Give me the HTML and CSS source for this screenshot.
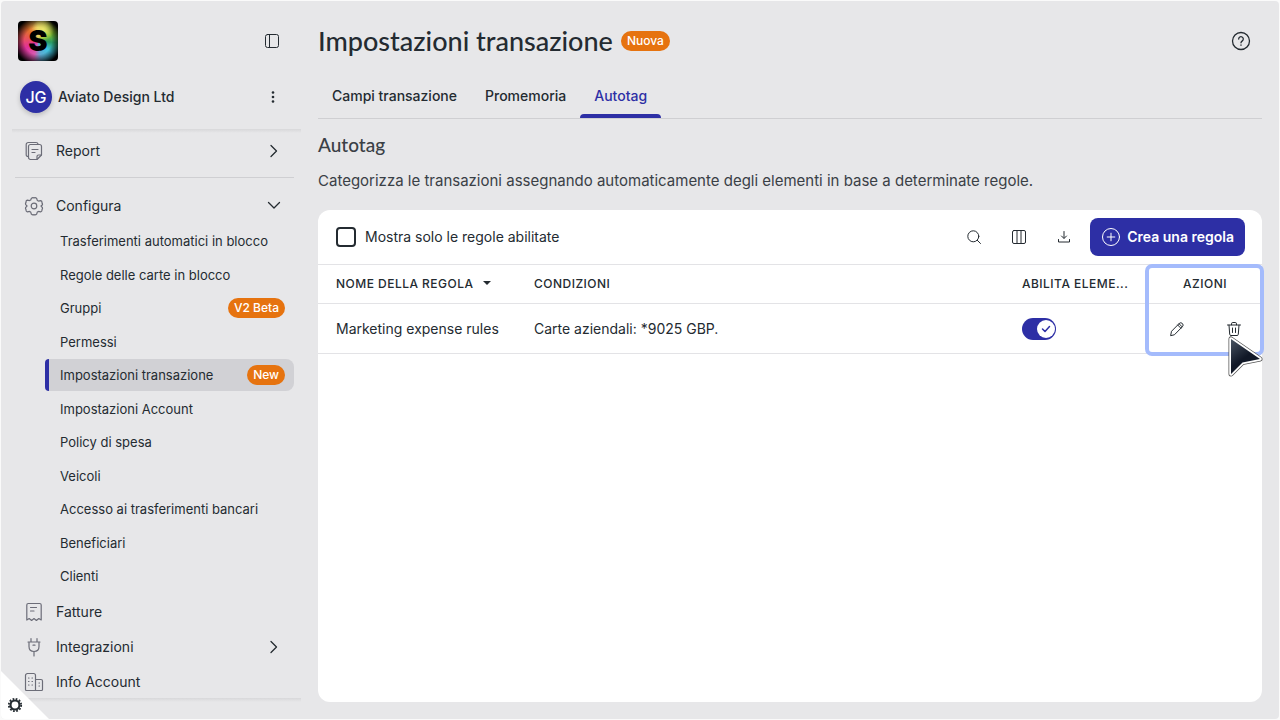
FILE: index.html
```html
<!DOCTYPE html>
<html lang="it">
  <head>
    <meta charset="utf-8">
    <meta name="viewport" content="width=device-width, initial-scale=1.0">
    <title>Impostazioni transazione</title>
    <link rel="stylesheet" href="styles.css">
  </head>
  <body>
    <div class="app">
      <aside class="sidebar">
        <div class="brand">
          <div class="logo">S</div>
          <button class="icon-btn" aria-label="Comprimi menu">
            <svg width="16" height="16" viewBox="0 0 16 16"><rect x="1.5" y="1.5" width="13" height="13" rx="2"/><path d="M5.5 1.5v13"/></svg>
          </button>
        </div>
        <div class="profile">
          <div class="avatar">JG</div>
          <span class="company">Aviato Design Ltd</span>
          <button class="icon-btn" aria-label="Altro">
            <svg width="16" height="16" viewBox="0 0 16 16" class="solid"><circle cx="8" cy="3.5" r="1.3"/><circle cx="8" cy="8" r="1.3"/><circle cx="8" cy="12.5" r="1.3"/></svg>
          </button>
        </div>
        <nav class="menu">
          <a href="#" class="menu-item top">
            <svg class="menu-icon" width="20" height="20" viewBox="0 0 20 20"><path d="M4.500 15.500H4a1.800 1.800 0 0 1-1.800-1.800V3.500a2 2 0 0 1 2-2h7.800a2 2 0 0 1 2 1.500"/><path d="M6.500 3.500h9a2 2 0 0 1 2 2v8.500L13 18.500H6.500a2 2 0 0 1-2-2v-11a2 2 0 0 1 2-2z"/><path d="M13 18.200v-2.700a1.500 1.500 0 0 1 1.500-1.500h2.800M8 8.500h6M8 11.500h3"/></svg>
            <span>Report</span>
            <svg class="chevron" width="16" height="16" viewBox="0 0 16 16"><path d="M5 2.500 10.500 8 5 13.500"/></svg>
          </a>
          <a href="#" class="menu-item top section">
            <svg class="menu-icon" width="20" height="20" viewBox="0 0 20 20"><path d="M7.400 2.300Q8.500 1.200 10 1.900q1.500-.7 2.600.4l.7 2.100 1.200.7 2.200-.4q1.500.4 1.300 2.300.9 1.100.2 2.100L17 10l1.200 1.400q.7 1-.2 2.100.2 1.900-1.300 2.300l-2.200-.4-1.200.7-.7 2.100q-1.100 1.100-2.600.4-1.500.7-2.600-.4l-.7-2.100-1.200-.7-2.200.4q-1.500-.4-1.300-2.300-.9-1.100-.2-2.100L3 10 1.800 8.600q-.7-1 .2-2.100-.2-1.900 1.300-2.300l2.200.4 1.200-.7z"/><circle cx="10" cy="10" r="2.800"/></svg>
            <span>Configura</span>
            <svg class="chevron" width="16" height="16" viewBox="0 0 16 16"><path d="M2.500 4.500 8 10l5.500-5.500"/></svg>
          </a>
          <ul class="submenu">
            <li><a href="#">Trasferimenti automatici in blocco</a></li>
            <li><a href="#">Regole delle carte in blocco</a></li>
            <li><a href="#">Gruppi <span class="badge">V2 Beta</span></a></li>
            <li><a href="#">Permessi</a></li>
            <li><a href="#" class="active">Impostazioni transazione <span class="badge">New</span></a></li>
            <li><a href="#">Impostazioni Account</a></li>
            <li><a href="#">Policy di spesa</a></li>
            <li><a href="#">Veicoli</a></li>
            <li><a href="#">Accesso ai trasferimenti bancari</a></li>
            <li><a href="#">Beneficiari</a></li>
            <li><a href="#">Clienti</a></li>
          </ul>
          <a href="#" class="menu-item">
            <svg class="menu-icon" width="20" height="20" viewBox="0 0 20 20"><path d="M2.800 18V3a1.500 1.500 0 0 1 1.500-1.500h11.400A1.500 1.500 0 0 1 17.200 3v15l-2.400-1.500-2.400 2-2.400-2-2.400 2-2.400-2z"/><path d="M6.500 5.500h6M6.500 9H10"/></svg>
            <span>Fatture</span>
          </a>
          <a href="#" class="menu-item">
            <svg class="menu-icon" width="20" height="20" viewBox="0 0 20 20"><path d="M7 1.500v3.500M13 1.500v3.500M4 5h12M5 5v4.500c0 3 2 5 5 5s5-2 5-5V5M10 14.500V19M9 8.200h2"/></svg>
            <span>Integrazioni</span>
            <svg class="chevron" width="16" height="16" viewBox="0 0 16 16"><path d="M5 2.500 10.500 8 5 13.500"/></svg>
          </a>
          <a href="#" class="menu-item">
            <svg class="menu-icon" width="20" height="20" viewBox="0 0 20 20"><path d="M11.500 18.500h-9a1 1 0 0 1-1-1V3.500a2 2 0 0 1 2-2h6a2 2 0 0 1 2 2zM11.500 7.500h5.500a1.500 1.500 0 0 1 1.500 1.500v8.500a1 1 0 0 1-1 1h-6"/><path d="M4.500 6h.500M8 6h.500M4.500 9.500h.500M8 9.500h.500M4.500 13h.500M8 13h.500M15 11h.500M15 14h.500"/></svg>
            <span>Info Account</span>
          </a>
        </nav>
      </aside>

      <main class="content">
        <header class="page-head">
          <h1>Impostazioni transazione</h1>
          <span class="badge">Nuova</span>
          <button class="icon-btn help" aria-label="Aiuto">
            <svg width="20" height="20" viewBox="0 0 20 20"><circle cx="10" cy="10" r="8.500"/><path d="M7.700 8a2.300 2.300 0 1 1 3.600 1.900c-.9.600-1.300 1-1.300 1.900M10 13.800v.500"/></svg>
          </button>
        </header>
        <nav class="tabs">
          <a href="#">Campi transazione</a>
          <a href="#">Promemoria</a>
          <a href="#" class="active">Autotag</a>
        </nav>
        <h2>Autotag</h2>
        <p class="intro">Categorizza le transazioni assegnando automaticamente degli elementi in base a determinate regole.</p>

        <section class="card">
          <div class="toolbar">
            <input type="checkbox" id="solo-abilitate">
            <label for="solo-abilitate">Mostra solo le regole abilitate</label>
            <div class="tools">
              <button class="icon-btn" aria-label="Cerca">
                <svg width="16" height="16" viewBox="0 0 16 16"><circle cx="7.300" cy="7.300" r="5.500"/><path d="m11.300 11.300 3.200 3.200"/></svg>
              </button>
              <button class="icon-btn" aria-label="Colonne">
                <svg width="16" height="16" viewBox="0 0 16 16"><rect x="1.500" y="1.500" width="13" height="13" rx="1.500"/><path d="M6 1.500v13M10 1.500v13"/></svg>
              </button>
              <button class="icon-btn" aria-label="Scarica">
                <svg width="16" height="16" viewBox="0 0 16 16"><path d="M8 2.500V9M5.500 7 8 9.500 10.500 7M2.500 10.500v2.500h11v-2.500"/></svg>
              </button>
            </div>
            <button class="create">
              <svg width="20" height="20" viewBox="0 0 20 20"><circle cx="10" cy="10" r="8.500"/><path d="M10 6.200v7.600M6.200 10h7.600"/></svg>
              Crea una regola
            </button>
          </div>
          <div class="rules">
            <table>
              <thead>
                <tr>
                  <th class="col-name">NOME DELLA REGOLA <span class="sort"></span></th>
                  <th>CONDIZIONI</th>
                  <th class="col-on">ABILITA ELEME...</th>
                  <th class="col-actions">AZIONI</th>
                </tr>
              </thead>
              <tbody>
                <tr>
                  <td>Marketing expense rules</td>
                  <td>Carte aziendali: *9025 GBP.</td>
                  <td>
                    <label class="switch">
                      <input type="checkbox" aria-label="Abilita regola" checked>
                      <span class="knob"><svg width="12" height="12" viewBox="0 0 12 12"><path d="m2.500 6 2.500 2.500 4.500-5"/></svg></span>
                    </label>
                  </td>
                  <td class="col-actions">
                    <div class="actions">
                      <button class="icon-btn" aria-label="Modifica">
                        <svg width="16" height="16" viewBox="0 0 16 16"><path d="m1.700 14.300.8-4L10.200 2.500a2.250 2.250 0 0 1 3.200 3.200L5.700 13.500zM8.700 4l3.200 3.200M10 2.700l3.200 3.200"/></svg>
                      </button>
                      <button class="icon-btn" aria-label="Elimina">
                        <svg width="16" height="16" viewBox="0 0 16 16"><path d="M1.500 4h13M5.500 3.800v-1a1.300 1.300 0 0 1 1.300-1.300h2.400a1.300 1.300 0 0 1 1.300 1.300v1M3 4.200l.7 9.100a1.300 1.300 0 0 0 1.300 1.200h6a1.300 1.300 0 0 0 1.300-1.200l.7-9.100M6.500 7v4.500M9.500 7v4.500"/></svg>
                      </button>
                    </div>
                  </td>
                </tr>
              </tbody>
            </table>
            <div class="highlight"></div>
            <svg class="pointer" width="38" height="46" viewBox="0 0 38 46">
              <defs>
                <linearGradient id="arrow" x1="0" y1="0" x2="0.600" y2="1"><stop offset="0" stop-color="#4a5563"/><stop offset="0.600" stop-color="#111827"/></linearGradient>
              </defs>
              <path d="M4 4v35l11.500-11.500L33 24z" stroke="#555" stroke-width="5"/>
              <path d="M4 4v35l11.500-11.500L33 24z" stroke="#fff" stroke-width="3.500"/>
              <path d="M4 4v35l11.500-11.500L33 24z" fill="url(#arrow)" stroke="none"/>
            </svg>
          </div>
        </section>
      </main>

      <button class="corner" aria-label="Preferenze">
        <svg width="16" height="16" viewBox="0 0 16 16"><circle cx="8" cy="8" r="4.500" stroke-width="2.200"/><circle class="teeth" cx="8" cy="8" r="6.200" stroke-width="1.800" stroke-dasharray="1.750 1.496"/></svg>
      </button>
    </div>
  </body>
</html>
```
FILE: styles.css
```css
* {
  box-sizing: border-box;
}
body {
  margin: 0;
  padding: 1px;
  min-height: 100vh;
  display: flex;
  background-color: #fafafa;
  color: #242b31;
  font-family: Inter, "Liberation Sans", sans-serif;
  font-size: 14px;
  line-height: 20px;
}
a {
  color: inherit;
  text-decoration: none;
}
button {
  font: inherit;
  color: inherit;
  border: none;
  background: none;
  padding: 0;
  cursor: pointer;
}
svg {
  display: block;
  flex: none;
  fill: none;
  stroke: currentColor;
  stroke-linecap: round;
  stroke-linejoin: round;
}
svg.solid {
  fill: currentColor;
  stroke: none;
}
.app {
  position: relative;
  flex: 1;
  display: flex;
  background-color: #e7e7e9;
  border-radius: 4px;
  overflow: hidden;
}
.icon-btn {
  display: flex;
  align-items: center;
  justify-content: center;
  width: 32px;
  height: 32px;
}
.badge {
  height: 20px;
  padding: 0 6px;
  border-radius: 10px;
  background-color: #e6730f;
  color: #fff;
  font-size: 12px;
  font-weight: 500;
}

/* sidebar */
.sidebar {
  flex: none;
  width: 300px;
  display: flex;
  flex-direction: column;
  padding: 20px 0 17px 11px;
}
.brand {
  display: flex;
  align-items: center;
  justify-content: space-between;
  padding: 0 13px 0 6px;
}
.logo {
  width: 40px;
  height: 40px;
  border-radius: 4px;
  background:
    radial-gradient(circle at 62% 22%, rgba(240, 232, 110, 0.9), transparent 28%),
    radial-gradient(circle at 50% 50%, transparent 48%, #000 84%),
    conic-gradient(#e8c860, #7fbc2c 60deg, #2a9a60 95deg, #3fc5e0 130deg, #5fa8d0 170deg, #d85ab0 195deg, #e0309a 240deg, #e8505f 280deg, #e2702c 320deg, #e8c860);
  color: #000;
  font-size: 29px;
  font-weight: 900;
  line-height: 40px;
  text-align: center;
}
.profile {
  display: flex;
  align-items: center;
  margin-top: 20px;
  padding: 0 12px 0 8px;
}
.avatar {
  width: 32px;
  height: 32px;
  border-radius: 50%;
  background-color: #2d2fa5;
  box-shadow: 0 2px 5px rgba(0, 0, 0, 0.2);
  color: #fff;
  font-size: 16px;
  font-weight: 500;
  line-height: 32px;
  text-align: center;
}
.company {
  flex: 1;
  margin-left: 6px;
  font-weight: 500;
}
.menu {
  flex: 1;
  display: flex;
  flex-direction: column;
  margin-top: 16px;
  padding-top: 3px;
  padding-bottom: 3px;
  background:
    linear-gradient(#d8d8da, #e7e7e9) top / 100% 4px no-repeat,
    linear-gradient(#d8d8da, #e7e7e9) bottom / 100% 4px no-repeat;
}
.menu-item {
  display: flex;
  align-items: center;
  height: 35px;
  margin: 0 7px 0 3px;
  padding: 0 12px 0 9px;
}
.menu-item.top {
  height: 38px;
}
.menu-item.section {
  margin-top: 7px;
  padding-top: 9px;
  height: 48px;
  border-top: 1px solid #cfcfd2;
}
.menu-item span {
  flex: 1;
  margin-left: 12px;
}
.menu-icon {
  color: #6c6d78;
  stroke-width: 1.2;
}
.chevron {
  stroke-width: 1.3;
}
.submenu {
  flex: 1;
  display: flex;
  flex-direction: column;
  justify-content: space-between;
  margin: 0 7px 2px 33px;
  padding: 0;
  list-style: none;
}
.submenu a {
  display: flex;
  align-items: center;
  justify-content: space-between;
  height: 32px;
  padding: 0 9px 0 11px;
  border-left: 4px solid transparent;
  font-size: 13px;
}
.submenu .active {
  border-radius: 4px 8px 8px 4px;
  border-left-color: #2d2fa5;
  background-color: #d1d1d5;
}

/* content */
.content {
  flex: 1;
  min-width: 0;
  display: flex;
  flex-direction: column;
  padding: 20px 17px 17px;
}
h1,
h2 {
  margin: 0;
  font-family: Lato, "Liberation Sans", sans-serif;
  font-weight: 500;
}
h1 {
  font-size: 27px;
  line-height: 40px;
}
.page-head {
  display: flex;
  align-items: center;
  gap: 8px;
}
.help {
  margin: 0 5px 0 auto;
}
.help svg {
  stroke-width: 1.3;
}
.tabs {
  display: flex;
  margin-top: 14px;
  border-bottom: 1px solid #cfcfd2;
}
.tabs a {
  position: relative;
  height: 43px;
  padding: 0 14px;
  line-height: 42px;
  font-weight: 500;
}
.tabs .active {
  color: #2d2fa5;
}
.tabs .active::after {
  content: "";
  position: absolute;
  left: 0;
  right: 0;
  bottom: 0;
  height: 4px;
  border-radius: 4px 4px 0 0;
  background-color: #2d2fa5;
}
h2 {
  margin-top: 14px;
  color: #3a4046;
  font-size: 19px;
  line-height: 24px;
}
.intro {
  margin: 12px 0 17px;
  color: #3a4046;
  font-size: 15px;
  line-height: 24px;
}
.card {
  flex: 1;
  border-radius: 12px;
  background-color: #fff;
}
.toolbar {
  display: flex;
  align-items: center;
  height: 54px;
  padding: 0 17px 0 18px;
}
.toolbar input {
  appearance: none;
  width: 20px;
  height: 20px;
  margin: 0 9px 0 0;
  border: 2px solid #242b31;
  border-radius: 4px;
}
.tools {
  display: flex;
  gap: 13px;
  margin: 0 10px 0 auto;
}
.create {
  display: flex;
  align-items: center;
  gap: 6px;
  height: 38px;
  padding: 0 11px;
  border-radius: 8px;
  background-color: #2d2fa5;
  color: #fff;
  font-weight: 600;
}
.rules {
  position: relative;
}
table {
  width: 100%;
  table-layout: fixed;
  border-collapse: collapse;
}
th,
td {
  height: 39px;
  padding: 0 0 0 18px;
  border-top: 1px solid #e3e3e6;
  text-align: left;
  white-space: nowrap;
}
th {
  font-size: 12px;
  font-weight: 500;
  letter-spacing: 0.04em;
}
td {
  height: 50px;
  border-bottom: 1px solid #e3e3e6;
}
.col-name {
  width: 198px;
}
.col-on {
  width: 144px;
}
.col-actions {
  width: 114px;
  padding: 0;
  text-align: center;
}
.sort {
  display: inline-block;
  margin: 0 0 3px 6px;
  border: 4px solid transparent;
  border-top-color: #242b31;
  border-bottom: none;
}
.switch {
  display: flex;
  align-items: center;
  justify-content: flex-end;
  width: 34px;
  height: 22px;
  padding: 1px;
  border-radius: 11px;
  background-color: #2d2fa5;
}
.switch input {
  appearance: none;
  width: 0;
  height: 0;
  margin: 0;
}
.knob {
  display: flex;
  align-items: center;
  justify-content: center;
  width: 18px;
  height: 18px;
  border-radius: 50%;
  background-color: #fff;
  color: #2d2fa5;
}
.knob svg {
  stroke-width: 1.5;
}
.actions {
  display: flex;
  justify-content: space-around;
}
.highlight {
  position: absolute;
  top: 0;
  right: -2px;
  bottom: -2px;
  width: 119px;
  border: 4px solid #a4bbfc;
  border-radius: 7px;
}
.pointer {
  position: absolute;
  right: -3px;
  bottom: -27px;
}

/* floating corner button */
.corner {
  position: absolute;
  left: 0;
  bottom: 0;
  display: flex;
  align-items: flex-end;
  width: 48px;
  height: 48px;
  padding: 0 0 6px 6px;
  background-color: #fff;
  clip-path: polygon(0 0, 100% 100%, 0 100%);
}
.corner .teeth {
  stroke-linecap: butt;
}
```
